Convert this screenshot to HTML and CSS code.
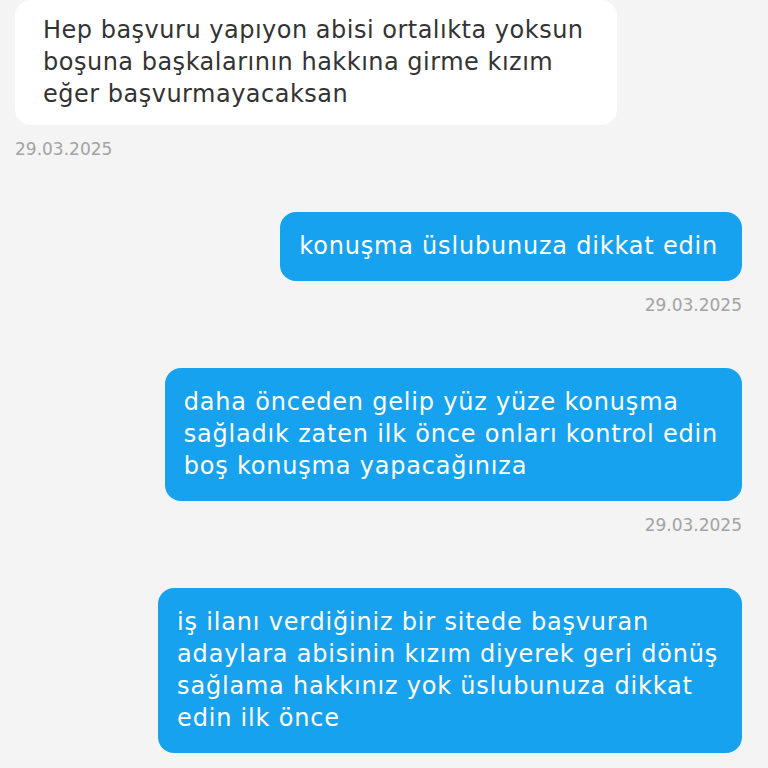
FILE: index.html
```html
<!DOCTYPE html>
<html lang="tr">
<head>
<meta charset="utf-8">
<link rel="stylesheet" href="styles.css">
</head>
<body>
<div class="chat">
  <div class="group incoming">
    <div class="bubble in">Hep başvuru yapıyon abisi ortalıkta yoksun<br>boşuna başkalarının hakkına girme kızım<br>eğer başvurmayacaksan</div>
    <div class="date">29.03.2025</div>
  </div>
  <div class="group outgoing">
    <div class="bubble out">konuşma üslubunuza dikkat edin</div>
    <div class="date">29.03.2025</div>
  </div>
  <div class="group outgoing">
    <div class="bubble out">daha önceden gelip yüz yüze konuşma<br>sağladık zaten ilk önce onları kontrol edin<br>boş konuşma yapacağınıza</div>
    <div class="date">29.03.2025</div>
  </div>
  <div class="group outgoing">
    <div class="bubble out">iş ilanı verdiğiniz bir sitede başvuran<br>adaylara abisinin kızım diyerek geri dönüş<br>sağlama hakkınız yok üslubunuza dikkat<br>edin ilk önce</div>
  </div>
</div>
</body>
</html>
```
FILE: styles.css
```css
html, body {
  margin: 0;
  padding: 0;
  background: #f4f4f4;
  width: 768px;
  height: 768px;
  overflow: hidden;
}
.chat {
  display: flex;
  flex-direction: column;
  gap: 51px;
  padding: 0 26px 0 15px;
  font-family: "DejaVu Sans", sans-serif;
}
.group {
  display: flex;
  flex-direction: column;
}
.incoming { align-items: flex-start; }
.outgoing { align-items: flex-end; }
.bubble {
  font-size: 24px;
  line-height: 32px;
  border-radius: 16px;
  white-space: nowrap;
}
.in {
  background: #ffffff;
  color: #333333;
  letter-spacing: 0.5px;
  padding: 14px 33px 15px 28px;
}
.out {
  background: #16a2ee;
  color: #ffffff;
  letter-spacing: 0.8px;
  padding: 18px 24px 19px 19px;
}
.date {
  margin-top: 12px;
  font-size: 17px;
  line-height: 24px;
  color: #a3a3a3;
}
```
